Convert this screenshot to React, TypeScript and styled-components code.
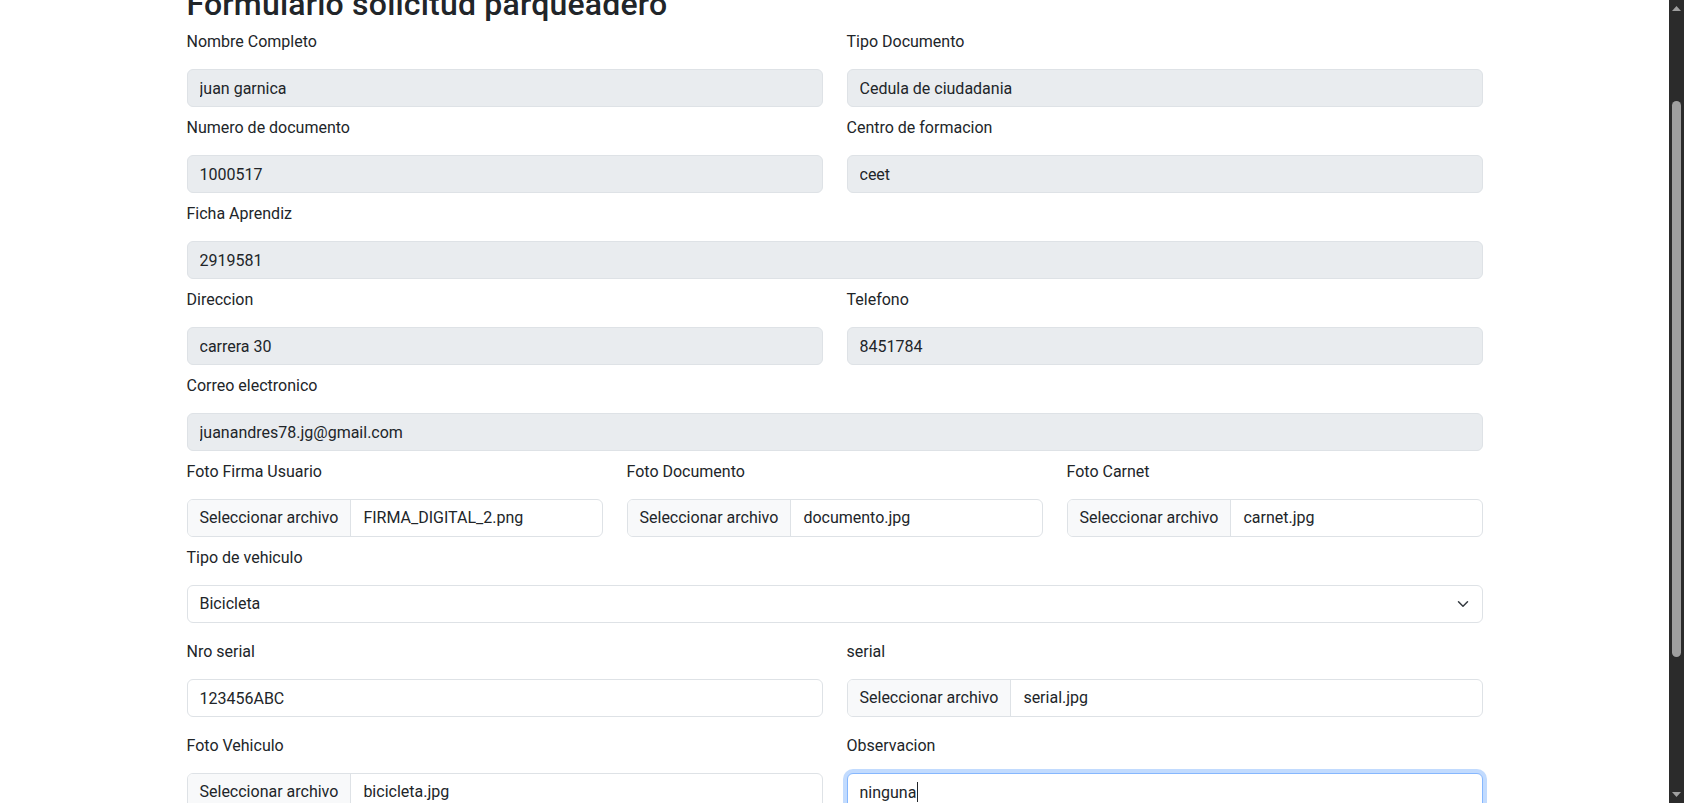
import React, { useLayoutEffect, useRef, useState } from "react";
import styled, { createGlobalStyle } from "styled-components";

const FONT_STACK = `"Segoe UI", Roboto, "Helvetica Neue", "Noto Sans", "Liberation Sans", Arial, sans-serif`;

const GlobalStyle = createGlobalStyle`
  html, body {
    margin: 0;
    padding: 0;
    height: 100%;
    overflow: hidden;
  }
  body {
    font-family: ${FONT_STACK};
    font-size: 16px;
    line-height: 1.5;
    color: #212529;
    background: #fff;
  }
  *, *::before, *::after {
    box-sizing: border-box;
  }
`;

const SCROLL_TOP = 121;

const Window = styled.div`
  display: flex;
  height: 100vh;
`;

// page is shown scrolled down a bit
const Content = styled.div`
  flex: 1;
  min-width: 0;
  overflow: hidden;
`;

// dark windows style scrollbar on the right
const Rail = styled.div`
  flex: 0 0 15px;
  display: flex;
  flex-direction: column;
  background: #2b2b2b;
`;

const RailArrow = styled.div`
  flex: 0 0 17px;
  display: flex;
  align-items: center;
  justify-content: center;
`;

const Track = styled.div`
  flex: 1;
  display: flex;
  flex-direction: column;
  align-items: center;
`;

const Thumb = styled.div`
  width: 9px;
  border-radius: 5px;
  background: #9f9f9f;
`;

const Container = styled.main`
  max-width: 1320px;
  margin: 0 auto;
  padding: 106px 12px 123px;
`;

const Title = styled.h2`
  margin: 0 0 7px;
  font-size: 32px;
  font-weight: 500;
  line-height: 1.2;
  letter-spacing: 0.2px;
  color: #212529;
`;

const Row = styled.div<{ $cols: number; $gap: number }>`
  display: grid;
  grid-template-columns: repeat(${(p) => p.$cols}, minmax(0, 1fr));
  column-gap: 24px;
  margin-bottom: ${(p) => p.$gap}px;
`;

const Field = styled.div`
  display: flex;
  flex-direction: column;
`;

const Label = styled.label`
  display: block;
  font-size: 16px;
  line-height: 24px;
  margin-bottom: 15px;
`;

const InputWrap = styled.div`
  position: relative;
`;

const TextInput = styled.input<{ $locked?: boolean; $focused?: boolean }>`
  display: block;
  width: 100%;
  height: 38px;
  padding: 6px 12px;
  font: inherit;
  font-size: 16px;
  line-height: 24px;
  color: #212529;
  background: ${(p) => (p.$locked ? "#e9ecef" : "#fff")};
  border: 1px solid ${(p) => (p.$focused ? "#86b7fe" : "#dee2e6")};
  border-radius: 6px;
  outline: none;
  box-shadow: ${(p) => (p.$focused ? "0 0 0 4px rgba(13, 110, 253, 0.25)" : "none")};
`;

// text cursor drawn over the focused field
const Caret = styled.span`
  position: absolute;
  top: 9px;
  width: 1px;
  height: 20px;
  background: #212529;
  pointer-events: none;
`;

const FileBox = styled.div`
  display: flex;
  height: 38px;
  border: 1px solid #dee2e6;
  border-radius: 6px;
  overflow: hidden;
  background: #fff;
`;

const FileButton = styled.span`
  display: flex;
  align-items: center;
  padding: 0 12px;
  background: #f8f9fa;
  border-right: 1px solid #dee2e6;
  white-space: nowrap;
`;

const FileName = styled.span`
  display: flex;
  align-items: center;
  padding: 0 12px;
  white-space: nowrap;
`;

const SelectWrap = styled.div`
  position: relative;
`;

const Select = styled.select`
  display: block;
  width: 100%;
  height: 38px;
  padding: 6px 36px 6px 12px;
  font: inherit;
  font-size: 16px;
  line-height: 24px;
  color: #212529;
  background: #fff;
  border: 1px solid #dee2e6;
  border-radius: 6px;
  appearance: none;
  outline: none;
`;

const Chevron = styled.svg`
  position: absolute;
  right: 12px;
  top: 13px;
  width: 16px;
  height: 12px;
  pointer-events: none;
`;

const SubmitButton = styled.button`
  height: 38px;
  padding: 6px 12px;
  font: inherit;
  color: #fff;
  background: #0d6efd;
  border: 1px solid #0d6efd;
  border-radius: 6px;
`;

const measureText = (text: string) => {
  const ctx = document.createElement("canvas").getContext("2d");
  if (!ctx) return text.length * 8;
  ctx.font = `16px ${FONT_STACK}`;
  return ctx.measureText(text).width;
};

const TextField = ({ label, value, locked, focused }: { label: string; value: string; locked?: boolean; focused?: boolean }) => {
  const [caretX, setCaretX] = useState<number | null>(null);

  useLayoutEffect(() => {
    if (focused) setCaretX(13 + Math.round(measureText(value)));
  }, [focused, value]);

  return (
    <Field>
      <Label>{label}</Label>
      <InputWrap>
        <TextInput value={value} readOnly $locked={locked} $focused={focused} />
        {focused && caretX !== null && <Caret style={{ left: caretX }} />}
      </InputWrap>
    </Field>
  );
};

const FileField = ({ label, file }: { label: string; file: string }) => (
  <Field>
    <Label>{label}</Label>
    <FileBox>
      <FileButton>Seleccionar archivo</FileButton>
      <FileName>{file}</FileName>
    </FileBox>
  </Field>
);

const App = () => {
  const viewRef = useRef<HTMLDivElement>(null);
  const [thumb, setThumb] = useState({ top: 84, size: 556 });

  useLayoutEffect(() => {
    const el = viewRef.current;
    if (!el) return;
    el.scrollTop = SCROLL_TOP;
    const track = el.clientHeight - 34;
    setThumb({
      top: (track * el.scrollTop) / el.scrollHeight,
      size: (track * el.clientHeight) / el.scrollHeight,
    });
  }, []);

  return (
    <>
      <GlobalStyle />
      <Window>
        <Content ref={viewRef}>
          <Container>
            <Title>Formulario solicitud parqueadero</Title>

            <Row $cols={2} $gap={9}>
              <TextField label="Nombre Completo" value="juan garnica" locked />
              <TextField label="Tipo Documento" value="Cedula de ciudadania" locked />
            </Row>
            <Row $cols={2} $gap={9}>
              <TextField label="Numero de documento" value="1000517" locked />
              <TextField label="Centro de formacion" value="ceet" locked />
            </Row>
            <Row $cols={1} $gap={9}>
              <TextField label="Ficha Aprendiz" value="2919581" locked />
            </Row>
            <Row $cols={2} $gap={9}>
              <TextField label="Direccion" value="carrera 30" locked />
              <TextField label="Telefono" value="8451784" locked />
            </Row>
            <Row $cols={1} $gap={9}>
              <TextField label="Correo electronico" value="juanandres78.jg@gmail.com" locked />
            </Row>
            <Row $cols={3} $gap={9}>
              <FileField label="Foto Firma Usuario" file="FIRMA_DIGITAL_2.png" />
              <FileField label="Foto Documento" file="documento.jpg" />
              <FileField label="Foto Carnet" file="carnet.jpg" />
            </Row>
            <Row $cols={1} $gap={17}>
              <Field>
                <Label>Tipo de vehiculo</Label>
                <SelectWrap>
                  <Select defaultValue="bicicleta">
                    <option value="bicicleta">Bicicleta</option>
                    <option value="moto">Motocicleta</option>
                    <option value="carro">Carro</option>
                  </Select>
                  <Chevron viewBox="0 0 16 16" fill="none" stroke="#343a40" strokeWidth="2" strokeLinecap="round" strokeLinejoin="round">
                    <path d="m2 5 6 6 6-6" />
                  </Chevron>
                </SelectWrap>
              </Field>
            </Row>
            <Row $cols={2} $gap={17}>
              <TextField label="Nro serial" value="123456ABC" />
              <FileField label="serial" file="serial.jpg" />
            </Row>
            <Row $cols={2} $gap={17}>
              <FileField label="Foto Vehiculo" file="bicicleta.jpg" />
              <TextField label="Observacion" value="ninguna" focused />
            </Row>

            <SubmitButton type="submit">Enviar</SubmitButton>
          </Container>
        </Content>

        <Rail>
          <RailArrow>
            <svg width="9" height="5" viewBox="0 0 9 5">
              <polygon points="0,5 4.5,0 9,5" fill="#9f9f9f" />
            </svg>
          </RailArrow>
          <Track>
            <Thumb style={{ marginTop: thumb.top, height: thumb.size }} />
          </Track>
          <RailArrow>
            <svg width="9" height="5" viewBox="0 0 9 5">
              <polygon points="0,0 9,0 4.5,5" fill="#9f9f9f" />
            </svg>
          </RailArrow>
        </Rail>
      </Window>
    </>
  );
};

export default App;
